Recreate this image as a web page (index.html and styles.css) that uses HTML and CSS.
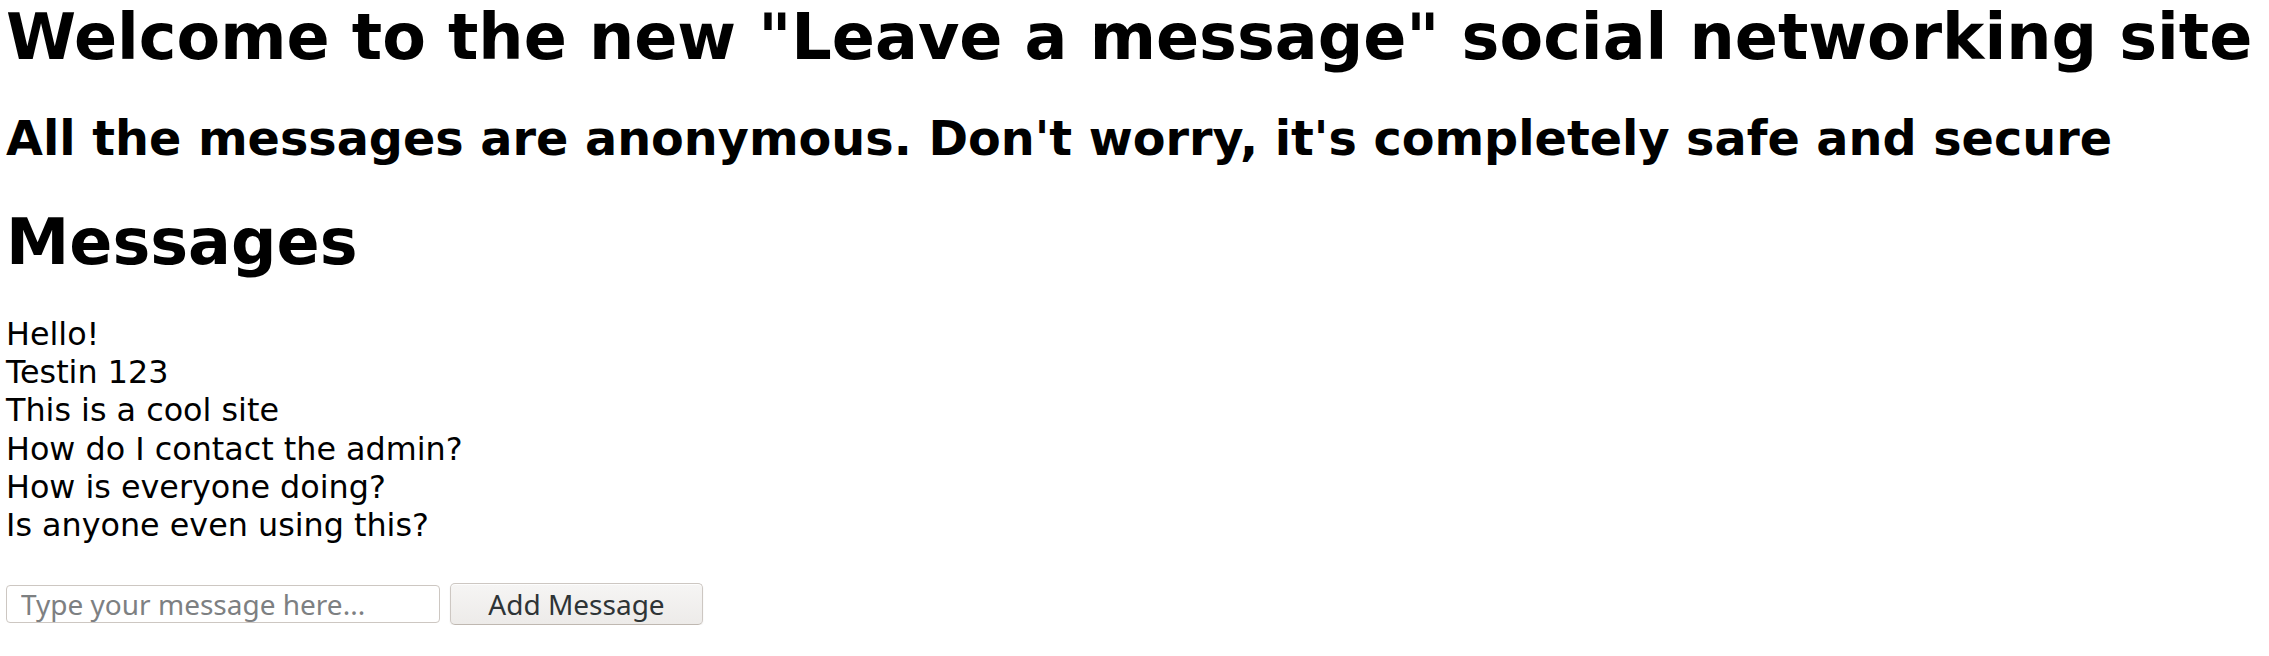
FILE: index.html
```html
<!DOCTYPE html>
<html lang="en">
<head>
<meta charset="utf-8">
<title>Leave a message</title>
<link rel="stylesheet" href="styles.css">
</head>
<body>
<h1 class="title">Welcome to the new "Leave a message" social networking site</h1>
<h2 class="subtitle">All the messages are anonymous. Don't worry, it's completely safe and secure</h2>
<h2 class="section-title">Messages</h2>
<div class="messages">
  <div class="message">Hello!</div>
  <div class="message">Testin 123</div>
  <div class="message">This is a cool site</div>
  <div class="message">How do I contact the admin?</div>
  <div class="message">How is everyone doing?</div>
  <div class="message">Is anyone even using this?</div>
</div>
<form class="composer">
  <input class="composer-input" type="text" placeholder="Type your message here...">
  <button class="composer-button" type="button">Add Message</button>
</form>
</body>
</html>
```
FILE: styles.css
```css
html, body {
  background: #ffffff;
}
body {
  margin: 0;
  padding: 0 0 0 6px;
  font-family: "DejaVu Sans", sans-serif;
  color: #000000;
}
.title {
  margin: 0;
  font-size: 63.6px;
  font-weight: bold;
  line-height: 74px;
  white-space: nowrap;
}
.subtitle {
  margin: 37px 0 0;
  font-size: 47.7px;
  font-weight: bold;
  line-height: 56px;
  white-space: nowrap;
}
.section-title {
  margin: 38px 0 0;
  font-size: 63.6px;
  font-weight: bold;
  line-height: 74px;
}
.messages {
  margin-top: 36px;
  font-size: 31.8px;
  line-height: 38.2px;
}
.composer {
  margin: 39px 0 0;
  display: flex;
  align-items: center;
  gap: 10px;
}
.composer-input {
  box-sizing: border-box;
  width: 434px;
  height: 38px;
  margin: 0;
  padding: 0 14px;
  border: 1px solid #cdc7c2;
  border-radius: 4px;
  background: #ffffff;
  font-family: "Noto Sans", sans-serif;
  font-size: 28px;
  line-height: 36px;
  color: #2e3436;
  outline: none;
}
.composer-input::placeholder {
  color: #7d8082;
  opacity: 1;
}
.composer-button {
  box-sizing: border-box;
  width: 253px;
  height: 42px;
  margin: 0;
  padding: 0;
  border: 1px solid #cdc7c2;
  border-bottom-color: #bfb8b1;
  border-radius: 5px;
  background: linear-gradient(to bottom, #f6f5f4, #edebe9);
  box-shadow: inset 0 1px rgba(255, 255, 255, 0.8), 0 1px 2px rgba(0, 0, 0, 0.07);
  font-family: "Noto Sans", sans-serif;
  font-size: 28px;
  line-height: 40px;
  color: #2e3436;
}
```
